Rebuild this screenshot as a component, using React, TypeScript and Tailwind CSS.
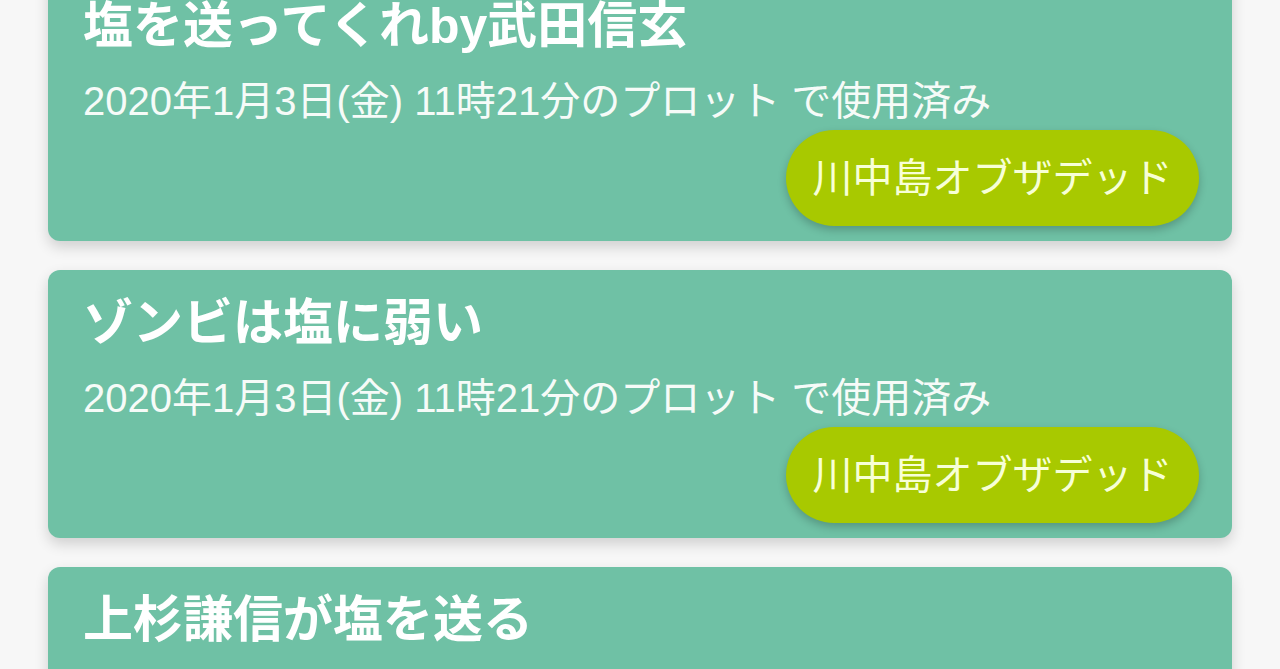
import React from "react";

const items = [
  "塩を送ってくれby武田信玄",
  "ゾンビは塩に弱い",
  "上杉謙信が塩を送る",
];

function Card({ title }: { title: string }) {
  return (
    <div className="mx-[48px] h-[268px] shrink-0 rounded-[12px] bg-[#6fc1a5] pl-[35px] pr-[33px] pt-[23px] pb-[15px] shadow-[0_6px_14px_rgba(0,0,0,0.16)] flex flex-col">
      <div className="text-[50px] leading-[60px] font-bold text-white whitespace-nowrap">{title}</div>
      <div className="mt-[20px] text-[40px] leading-[50px] text-[#f6fbf8] whitespace-nowrap">
        2020年1月3日(金) 11時21分のプロット で使用済み
      </div>
      <div className="mt-[4px] flex justify-end">
        <div className="h-[96px] w-[413px] rounded-full bg-[#a8c900] flex items-center justify-center text-[40px] text-[#f7ffd6] shadow-[0_4px_8px_rgba(0,0,0,0.22)]">
          川中島オブザデッド
        </div>
      </div>
    </div>
  );
}

export default function App() {
  return (
    <div
      className="w-[1280px] h-[669px] overflow-hidden bg-[#f7f7f7]"
      style={{ fontFamily: '"Liberation Sans", "Noto Sans CJK JP", sans-serif' }}
    >
      <div className="-mt-[27px] flex flex-col gap-[29px]">
        {items.map((t) => (
          <Card key={t} title={t} />
        ))}
      </div>
    </div>
  );
}
